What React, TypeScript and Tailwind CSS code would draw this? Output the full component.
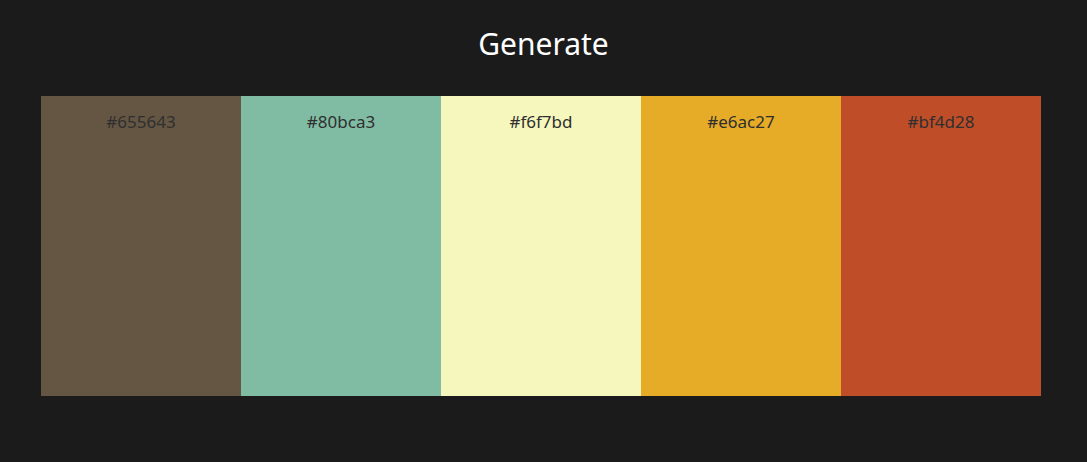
import React from "react";

const colors = ["#655643", "#80bca3", "#f6f7bd", "#e6ac27", "#bf4d28"];

export default function App() {
  return (
    <div
      className="min-h-[462px] w-full bg-[#1b1b1b] px-[41px] pt-[24px]"
      style={{ fontFamily: '"Noto Sans", "Open Sans", sans-serif' }}
    >
      <h1 className="text-center text-[30px] leading-[40px] text-white">Generate</h1>
      <div className="mt-[32px] flex h-[300px] w-[1000px]">
        {colors.map((c) => (
          <div
            key={c}
            className="flex-1 pt-[14px] text-center text-[17px] leading-[24px] text-[#2f2f2f]"
            style={{ backgroundColor: c }}
          >
            {c}
          </div>
        ))}
      </div>
    </div>
  );
}
